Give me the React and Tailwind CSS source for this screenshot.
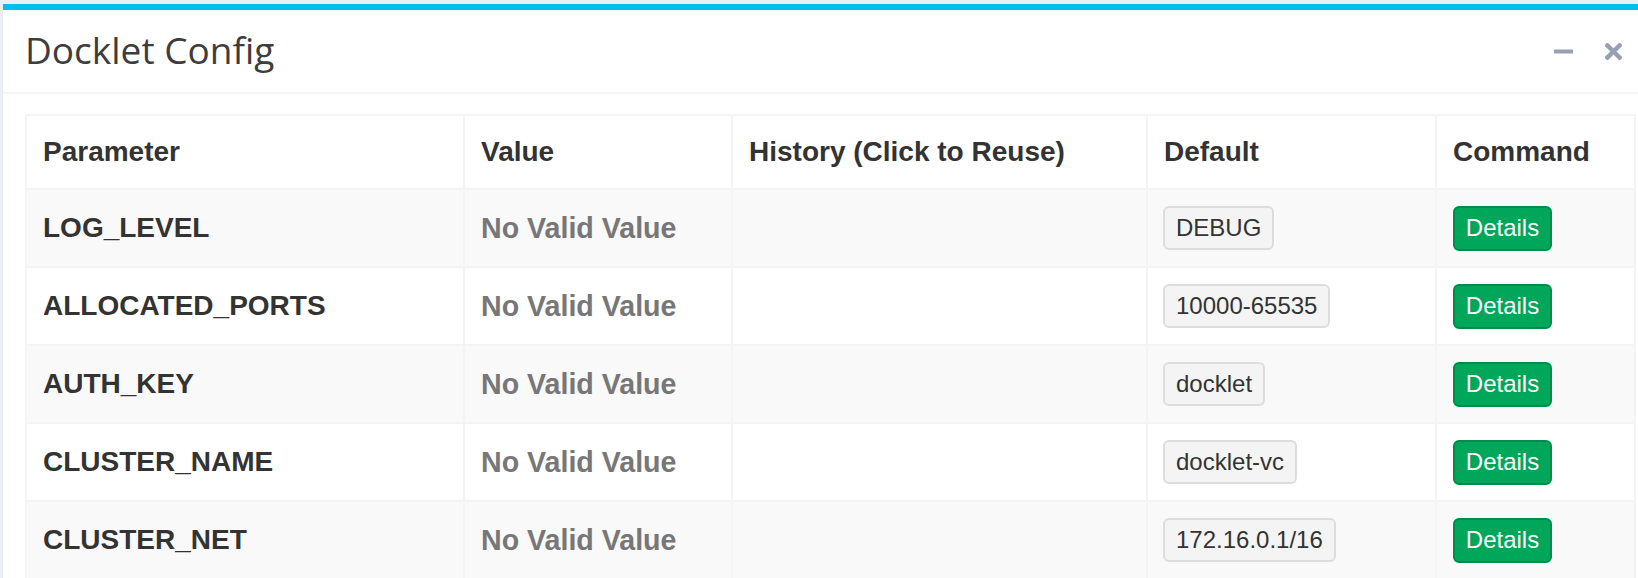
const rows = [
  { name: 'LOG_LEVEL', def: 'DEBUG' },
  { name: 'ALLOCATED_PORTS', def: '10000-65535' },
  { name: 'AUTH_KEY', def: 'docklet' },
  { name: 'CLUSTER_NAME', def: 'docklet-vc' },
  { name: 'CLUSTER_NET', def: '172.16.0.1/16' },
]

function BoxTools() {
  return (
    <div className="flex items-center gap-[32px]">
      {/* minimize */}
      <svg width="19" height="19" viewBox="0 0 19 19">
        <rect x="0" y="7.5" width="19" height="4" fill="#97a0b3" />
      </svg>
      {/* close */}
      <svg width="17" height="17" viewBox="0 0 17 17">
        <path d="M2.5 2.5 L14.5 14.5 M14.5 2.5 L2.5 14.5" stroke="#97a0b3" strokeWidth="4.5" strokeLinecap="square" />
      </svg>
    </div>
  )
}

export default function App() {
  return (
    <div className="w-[1638px] h-[578px] overflow-hidden bg-[#ecf0f5] pt-[4px] pl-[3px]">
      <div className="w-[1660px] bg-white border-t-[6px] border-[#00c0ef] shadow-[0_1px_1px_rgba(0,0,0,0.1)]">
        {/* header */}
        <div className="h-[84px] flex items-center justify-between pl-[22px] border-b-2 border-[#f4f4f4]">
          <h3 className="text-[37px] text-[#3d3d3d] font-['Open_Sans',sans-serif] leading-none pb-[4px]">
            Docklet Config
          </h3>
          <div className="mr-[41px]">
            <BoxTools />
          </div>
        </div>

        {/* body */}
        <div className="pt-[20px] pl-[22px] pb-[20px]">
          <table className="table-fixed border-collapse w-[1609px] font-['Liberation_Sans',Arial,sans-serif] text-[#333]">
            <colgroup>
              <col className="w-[438px]" />
              <col className="w-[268px]" />
              <col className="w-[415px]" />
              <col className="w-[289px]" />
              <col className="w-[199px]" />
            </colgroup>
            <thead>
              <tr className="bg-white">
                {['Parameter', 'Value', 'History (Click to Reuse)', 'Default', 'Command'].map((h) => (
                  <th
                    key={h}
                    className="h-[74px] border-2 border-[#f4f4f4] px-[16px] text-left align-middle text-[28px] font-bold leading-[40px]"
                  >
                    {h}
                  </th>
                ))}
              </tr>
            </thead>
            <tbody>
              {rows.map((r, i) => (
                <tr key={r.name} className={i % 2 === 0 ? 'bg-[#f9f9f9]' : 'bg-white'}>
                  <td className="h-[78px] border-2 border-[#f4f4f4] px-[16px] align-middle text-[28px] font-bold">
                    {r.name}
                  </td>
                  <td className="border-2 border-[#f4f4f4] px-[16px] align-middle text-[28.6px] font-bold text-[#777]">
                    No Valid Value
                  </td>
                  <td className="border-2 border-[#f4f4f4] px-[16px]"></td>
                  <td className="border-2 border-[#f4f4f4] px-[15px] align-middle">
                    <span className="inline-flex items-center h-[44px] px-[11px] border-2 border-[#ddd] bg-[#f4f4f4] rounded-[6px] text-[24px] text-[#333]">
                      {r.def}
                    </span>
                  </td>
                  <td className="border-2 border-[#f4f4f4] px-[16px] align-middle">
                    <button className="h-[45px] w-[99px] flex items-center justify-center border-2 border-[#008d4c] bg-[#00a65a] rounded-[6px] text-[24px] text-white">
                      Details
                    </button>
                  </td>
                </tr>
              ))}
            </tbody>
          </table>
        </div>
      </div>
    </div>
  )
}
